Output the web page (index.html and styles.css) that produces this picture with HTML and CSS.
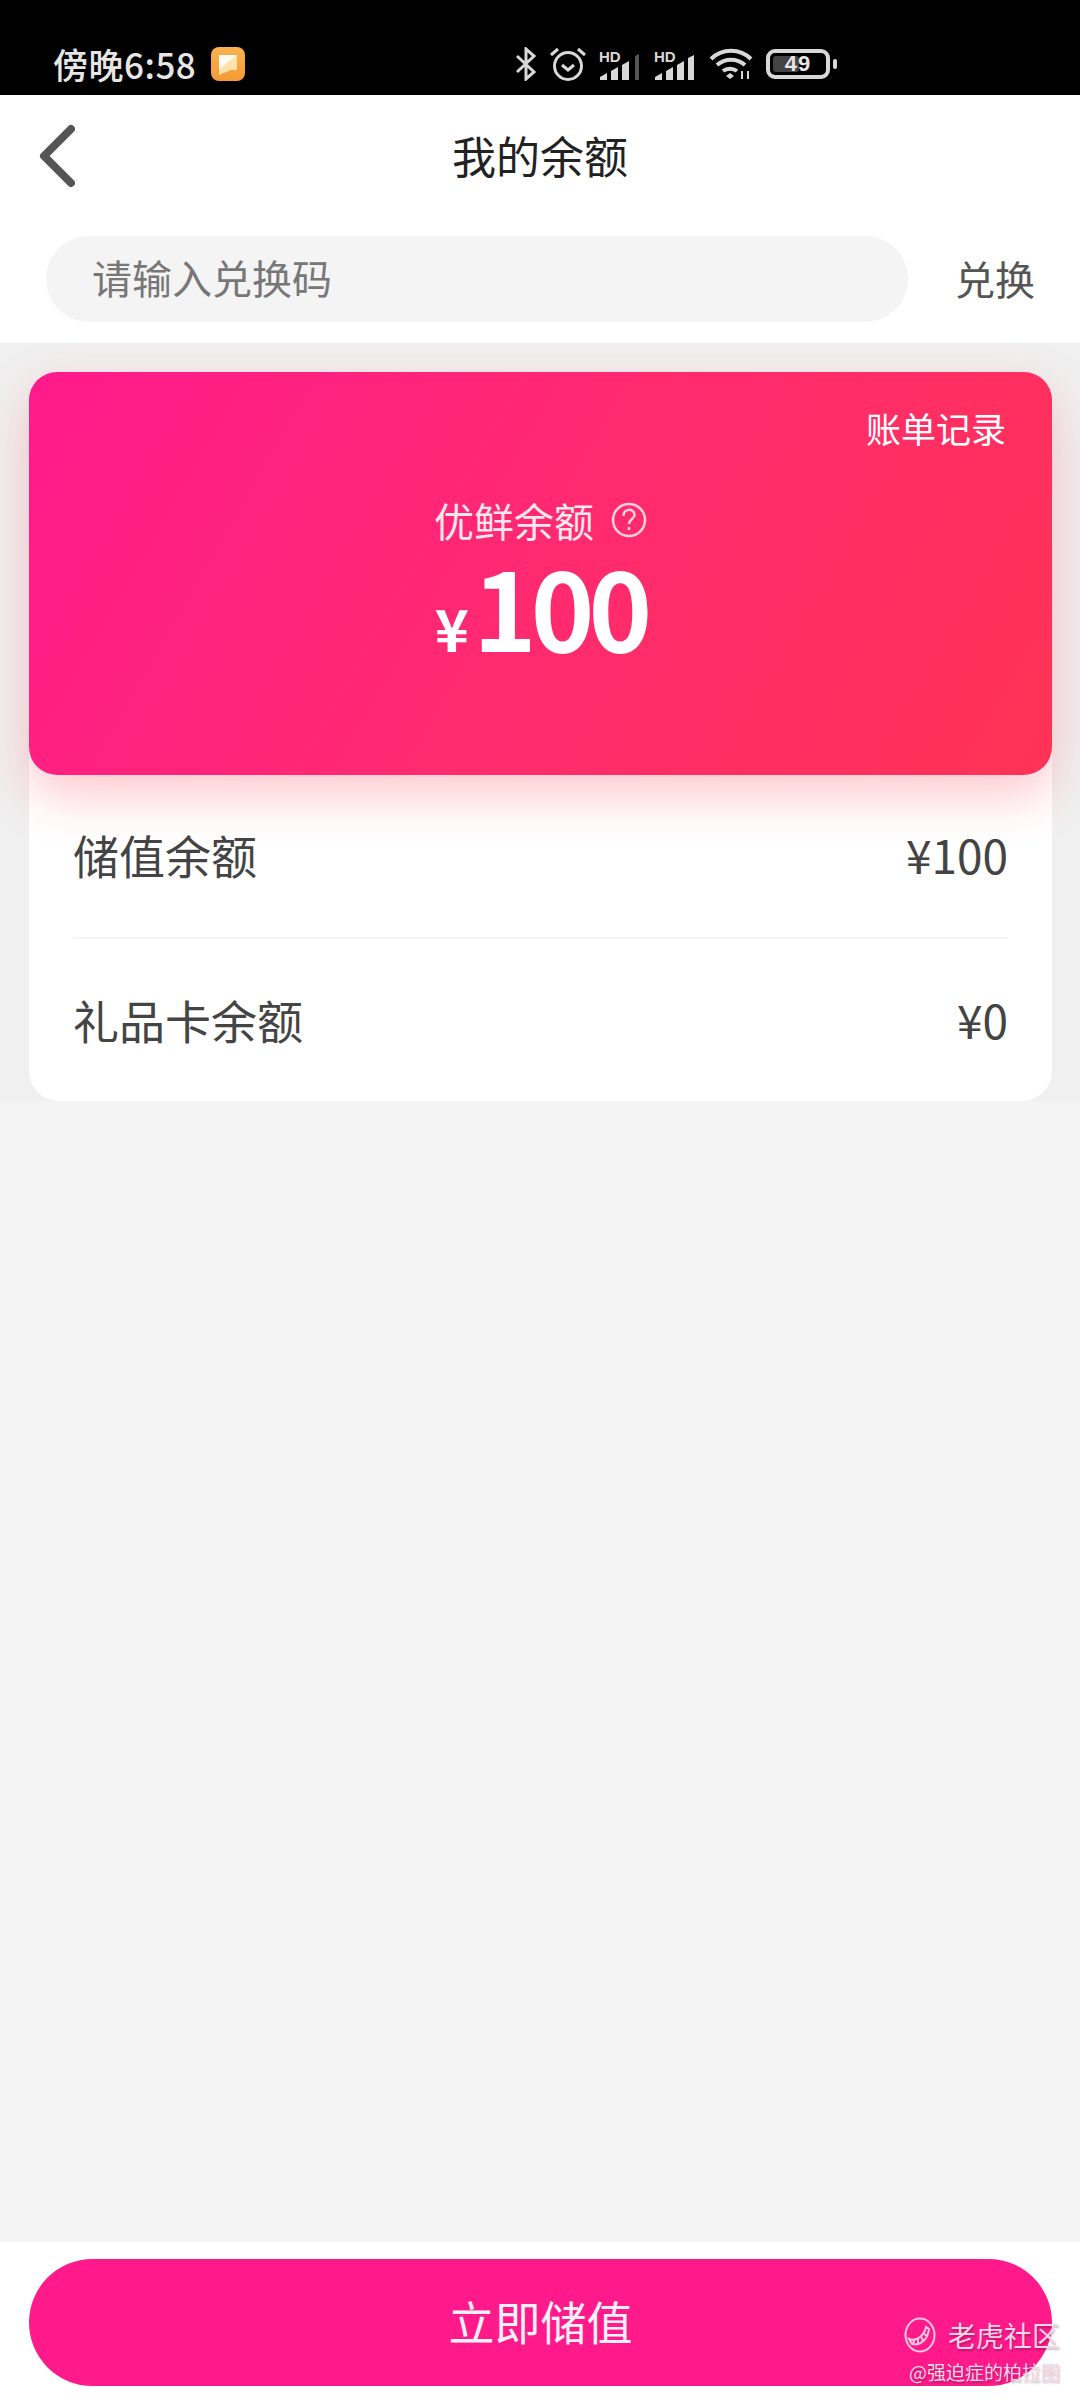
FILE: index.html
```html
<!DOCTYPE html>
<html lang="zh-CN">
  <head>
    <meta charset="UTF-8" />
    <meta name="viewport" content="width=device-width, initial-scale=1.0" />
    <title>我的余额</title>
    <link rel="stylesheet" href="styles.css">
  </head>
  <body>
    <div id="container">
      <div class="status-bar">
        <span class="status-time">傍晚6:58</span>
        <svg class="status-app" width="34" height="34" viewBox="0 0 34 34">
          <defs>
            <linearGradient id="app-bg" x1="0" y1="0" x2="0" y2="1">
              <stop offset="0" stop-color="#f9b24f" />
              <stop offset="1" stop-color="#f59a33" />
            </linearGradient>
          </defs>
          <rect width="34" height="34" rx="8" fill="url(#app-bg)" />
          <path d="M8 8h18v15l-6 0-12 5z" fill="#ffe2ae" />
          <path d="M8 8h18L8 22z" fill="#fffaf0" />
        </svg>
        <div class="status-icons">
          <svg width="22" height="34" viewBox="0 0 22 34" fill="none" stroke="#d8d8d8" stroke-width="3">
            <path d="M2 9l17 16-8 7V2l8 7L2 25" />
          </svg>
          <svg width="36" height="34" viewBox="0 0 36 34" fill="none" stroke="#d8d8d8" stroke-width="3">
            <circle cx="18" cy="19" r="13.5" />
            <path d="M12 18l6 5 6-5M1 8l7-6M35 8l-7-6" />
          </svg>
          <svg width="42" height="34" viewBox="0 -4 42 34">
            <text x="0" y="11" class="status-hd">HD</text>
            <path d="M1 29v-3l7-4v7zM12 29v-9l7-4v13zM23 29V14l7-4v19z" fill="#d8d8d8" />
            <path d="M36 29V5l4-2v26z" fill="#555" />
          </svg>
          <svg width="42" height="34" viewBox="0 -4 42 34">
            <text x="0" y="11" class="status-hd">HD</text>
            <path d="M1 29v-3l7-4v7zM12 29v-9l7-4v13zM23 29V14l7-4v19zM34 29V7l6-3v25z" fill="#d8d8d8" />
          </svg>
          <svg width="44" height="34" viewBox="0 0 44 34" fill="none" stroke="#d8d8d8" stroke-width="4">
            <path d="M2 12c11-11 29-11 40 0M8 18c8-7 20-7 28 0M14 24c4-3 10-3 14 0" />
            <path d="M17 29l4-3 4 3-4 3z" fill="#d8d8d8" stroke="none" />
            <path d="M33 32v-8M39 24v8" stroke-width="2" />
          </svg>
          <div class="battery">
            <div class="battery-body">
              <div class="battery-level"></div>
              <span class="battery-text">49</span>
            </div>
            <div class="battery-nub"></div>
          </div>
        </div>
      </div>

      <div class="top-panel">
        <div class="title-bar">
          <svg class="back-icon" width="36" height="64" viewBox="0 0 36 64" fill="none" stroke="#555" stroke-width="8" stroke-linecap="round" stroke-linejoin="round">
            <path d="M32 5L5 32l27 27" />
          </svg>
          <h1 class="page-title">我的余额</h1>
        </div>
        <div class="redeem-row">
          <div class="redeem-input">请输入兑换码</div>
          <div class="redeem-btn">兑换</div>
        </div>
      </div>

      <div class="balance-section">
        <div class="balance-card">
          <div class="bill-link">账单记录</div>
          <div class="balance-label">
            <span>优鲜余额</span>
            <svg width="36" height="36" viewBox="0 0 36 36" fill="none" stroke="#fbd3de" stroke-width="2.5">
              <circle cx="18" cy="18" r="16" />
              <path d="M12.5 14c0-8 11-8 11-1 0 4-5.500 4-5.500 9" />
              <path d="M18 25v3" />
            </svg>
          </div>
          <div class="balance-amount"><span class="yen">¥</span><span class="amount">100</span></div>
        </div>
        <div class="balance-list">
          <div class="balance-row">
            <span>储值余额</span>
            <span>¥100</span>
          </div>
          <div class="balance-row">
            <span>礼品卡余额</span>
            <span>¥0</span>
          </div>
        </div>
      </div>

      <div class="spacer"></div>

      <div class="footer">
        <div class="charge-btn">立即储值</div>
      </div>

      <!-- watermark on top of the screenshot -->
      <div class="watermark">
        <div class="watermark-top">
          <svg width="32" height="36" viewBox="0 0 32 36" fill="none" stroke="#f8c8e0" stroke-width="2">
            <ellipse cx="16" cy="18" rx="14.500" ry="16.500" />
            <path d="M5 22c7 3 15-3 17-12l3 2c-1 10-8 17-17 15zM9 28l1-5M14 27l0-6M19 24l-2-5M23 19l-4-3" />
          </svg>
          <span>老虎社区</span>
        </div>
        <div class="watermark-sub">@强迫症的柏拉图</div>
      </div>
    </div>
  </body>
</html>
```

FILE: styles.css
```css
body {
  font-family: "Noto Sans CJK SC", "Noto Sans", sans-serif;
  margin: 0;
  background-color: #f4f4f4;
}

#container {
  position: relative;
  width: 1080px;
  height: 2400px;
  display: flex;
  flex-direction: column;
  overflow: hidden;
}

.status-bar {
  height: 95px;
  background-color: #000;
  display: flex;
  align-items: center;
  padding: 0 243px 0 53px;
  box-sizing: border-box;
  color: #e6e6e6;
  flex-shrink: 0;
}

.status-time {
  font-size: 35px;
  font-weight: 500;
  letter-spacing: 0.5px;
  line-height: 34px;
  margin-top: 32px;
}

.status-app {
  margin: 33px 0 0 15px;
}

.status-icons {
  margin: 33px 0 0 auto;
  display: flex;
  align-items: center;
  gap: 13px;
}

.status-hd {
  font-family: "Liberation Sans", sans-serif;
  font-size: 15px;
  font-weight: 700;
  fill: #d8d8d8;
}

.battery {
  display: flex;
  align-items: center;
  gap: 3px;
}

.battery-body {
  position: relative;
  width: 64px;
  height: 30px;
  border: 4px solid #d8d8d8;
  border-radius: 9px;
  box-sizing: border-box;
  display: flex;
  align-items: center;
  justify-content: center;
}

.battery-level {
  position: absolute;
  left: 3px;
  top: 3px;
  bottom: 3px;
  width: 26px;
  background-color: #444;
  border-radius: 3px;
}

.battery-text {
  position: relative;
  font-family: "Liberation Sans", sans-serif;
  font-size: 22px;
  font-weight: 700;
  letter-spacing: 1px;
  color: #e6e6e6;
}

.battery-nub {
  width: 4px;
  height: 10px;
  background-color: #d8d8d8;
  border-radius: 2px;
}

.top-panel {
  background-color: #fff;
  height: 248px;
  flex-shrink: 0;
}

.title-bar {
  position: relative;
  height: 141px;
  display: flex;
  align-items: flex-start;
  justify-content: center;
}

.back-icon {
  position: absolute;
  left: 39px;
  top: 29px;
}

.page-title {
  font-size: 44px;
  font-weight: 400;
  line-height: 64px;
  margin: 28px 0 0;
  color: #222;
}

.redeem-row {
  display: flex;
  align-items: center;
  padding-left: 46px;
}

.redeem-input {
  width: 862px;
  height: 86px;
  box-sizing: border-box;
  padding-left: 46px;
  line-height: 82px;
  border-radius: 43px;
  background-color: #f4f4f4;
  font-size: 40px;
  color: #777;
}

.redeem-btn {
  margin-left: 47px;
  font-size: 40px;
  line-height: 56px;
  margin-top: -2px;
  color: #555;
}

.balance-section {
  background-color: #f0f0f0;
  padding: 29px 28px 0 29px;
  height: 758px;
  box-sizing: border-box;
  flex-shrink: 0;
}

.balance-card {
  position: relative;
  z-index: 1;
  height: 403px;
  box-sizing: border-box;
  padding-top: 31px;
  border-radius: 28px;
  background: linear-gradient(120deg, #ff1a8c 0%, #ff2a70 50%, #ff3355 100%);
  box-shadow: 0 20px 50px rgba(255, 70, 90, 0.3);
  color: #fff;
  display: flex;
  flex-direction: column;
  align-items: center;
}

.bill-link {
  align-self: flex-end;
  margin-right: 46px;
  font-size: 35px;
  line-height: 50px;
}

.balance-label {
  display: flex;
  align-items: center;
  gap: 17px;
  margin-top: 41px;
  font-size: 40px;
  line-height: 52px;
  color: #fde6ec;
}

.balance-amount {
  display: flex;
  align-items: baseline;
  line-height: 118px;
  margin-top: 0;
}

.yen {
  font-size: 58px;
  font-weight: 700;
  margin-right: 4px;
}

.amount {
  font-size: 108px;
  font-weight: 700;
  letter-spacing: -6px;
}

.balance-list {
  margin-top: -30px;
  padding: 30px 44px 0;
  height: 356px;
  box-sizing: border-box;
  background-color: #fff;
  border-radius: 0 0 30px 30px;
}

.balance-row {
  height: 162px;
  padding-bottom: 5px;
  box-sizing: border-box;
  display: flex;
  align-items: center;
  justify-content: space-between;
  font-size: 46px;
  color: #444;
}

.balance-row + .balance-row {
  padding-bottom: 0;
  border-top: 2px solid #f4f4f4;
}

.spacer {
  flex: 1;
}

.footer {
  height: 158px;
  box-sizing: border-box;
  padding: 17px 28px 0 29px;
  background-color: #fff;
  flex-shrink: 0;
}

.charge-btn {
  height: 127px;
  line-height: 122px;
  border-radius: 64px;
  background-color: #ff1a8c;
  color: #fdf0f6;
  text-align: center;
  font-size: 46px;
}

.watermark {
  position: absolute;
  right: 20px;
  top: 2315px;
  display: flex;
  flex-direction: column;
  align-items: flex-end;
  color: #f8d5e6;
  text-shadow: 1px 2px 2px rgba(0, 0, 0, 0.25);
}

.watermark-top {
  display: flex;
  align-items: center;
  gap: 12px;
  font-size: 28px;
  line-height: 40px;
}

.watermark-sub {
  font-size: 19px;
  line-height: 28px;
  margin-top: 3px;
}
```
